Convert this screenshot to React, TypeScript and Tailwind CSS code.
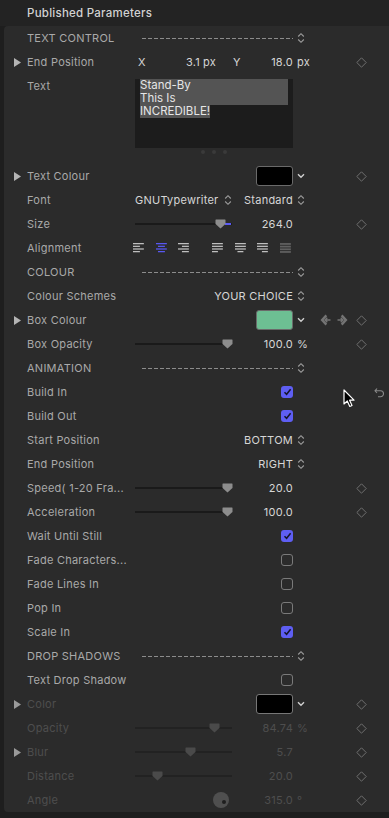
import type { ReactNode } from 'react';

const LABEL = 'text-[#a9a9a9]';
const VALUE = 'text-[#d6d6d6]';

function Tri({ dim }: { dim?: boolean }) {
  return (
    <svg width="7" height="9" viewBox="0 0 7 9">
      <path d="M0 0 L7 4.5 L0 9 Z" fill={dim ? '#9a9a9a' : '#b4b4b4'} />
    </svg>
  );
}

function Diamond() {
  return (
    <svg width="11" height="11" viewBox="0 0 11 11">
      <path d="M5.5 0.8 L10.2 5.5 L5.5 10.2 L0.8 5.5 Z" fill="none" stroke="#6f6f6f" strokeWidth="1" />
    </svg>
  );
}

function UpDown({ dim }: { dim?: boolean }) {
  return (
    <svg width="8" height="12" viewBox="0 0 8 12">
      <path d="M1.2 4.5 L4 1.7 L6.8 4.5 M1.2 7.5 L4 10.3 L6.8 7.5" fill="none" stroke={dim ? '#555' : '#9c9c9c'} strokeWidth="1.1" />
    </svg>
  );
}

function ChevronDown() {
  return (
    <svg width="8" height="6" viewBox="0 0 8 6">
      <path d="M1 1.3 L4 4.3 L7 1.3" fill="none" stroke="#d0d0d0" strokeWidth="1.4" />
    </svg>
  );
}

function Thumb({ dim }: { dim?: boolean }) {
  return (
    <svg width="11" height="10" viewBox="0 0 11 10">
      <path d="M1 0.5 H10 Q10.5 0.5 10.5 1 V5 L5.5 9.5 L0.5 5 V1 Q0.5 0.5 1 0.5 Z" fill={dim ? '#4a4a4a' : '#8d8d8d'} />
    </svg>
  );
}

function Check({ on }: { on?: boolean }) {
  if (!on) return <div className="w-[12px] h-[12px] rounded-[3px] border border-[#7a7a7a]" />;
  return (
    <div className="w-[12px] h-[12px] rounded-[3px] bg-[#5e5ef2] flex items-center justify-center">
      <svg width="9" height="8" viewBox="0 0 9 8">
        <path d="M1.5 4.2 L3.6 6.3 L7.6 1.2" fill="none" stroke="#15152a" strokeWidth="1.5" />
      </svg>
    </div>
  );
}

function Slider({ pos, value, blue, dim }: { pos: number; value: string; blue?: boolean; dim?: boolean }) {
  return (
    <div className="flex items-center w-full">
      <div className="relative w-[97px] h-[10px]">
        <div className={`absolute left-0 right-0 top-[4px] h-[2px] ${dim ? 'bg-[#222]' : 'bg-[#1a1a1a]'}`} />
        {blue && <div className="absolute top-[4px] h-[2px] w-[6px] bg-[#5a5af5]" style={{ left: pos + 5 }} />}
        <div className="absolute top-0" style={{ left: pos - 5 }}>
          <Thumb dim={dim} />
        </div>
      </div>
      <span className={`flex-1 text-right ${dim ? 'text-[#4e4e4e]' : VALUE}`}>{value}</span>
    </div>
  );
}

function Dashed() {
  return (
    <div className="flex items-center w-full pl-[7px]">
      <div className="h-[1px] w-full bg-[repeating-linear-gradient(90deg,#8c8c8c_0_4px,transparent_4px_6px)]" />
    </div>
  );
}

function Swatch({ color, dim }: { color: string; dim?: boolean }) {
  return (
    <div className="w-full flex justify-end">
      <div className={`w-[37px] h-[20px] rounded-[3px] border ${dim ? 'border-[#777]' : 'border-[#6a6a6a]'}`} style={{ background: color }} />
    </div>
  );
}

type RowProps = {
  label: string;
  tri?: boolean;
  dim?: boolean;
  main?: ReactNode;
  suffix?: ReactNode;
  nav?: ReactNode;
  diamond?: boolean;
  extra?: ReactNode;
};

function Row({ label, tri, dim, main, suffix, nav, diamond, extra }: RowProps) {
  return (
    <div className="flex items-center h-[24px]">
      <div className="w-[23px] pl-[10px] flex items-center">{tri && <Tri dim={dim} />}</div>
      <div className={`w-[108px] whitespace-nowrap ${dim ? 'text-[#4e4e4e]' : LABEL}`}>{label}</div>
      <div className="w-[158px] flex items-center">{main}</div>
      <div className={`w-[22px] flex items-center pl-[4px] ${dim ? 'text-[#4e4e4e]' : VALUE}`}>{suffix}</div>
      <div className="w-[34px] flex items-center">{nav}</div>
      <div className="w-[24px] flex items-center justify-center">{diamond && <Diamond />}</div>
      <div className="w-[12px] flex items-center justify-center">{extra}</div>
    </div>
  );
}

function Section({ label }: { label: string }) {
  return <Row label={label} main={<Dashed />} suffix={<UpDown />} />;
}

function PopupValue({ text }: { text: string }) {
  return <span className={`w-full text-right ${VALUE}`}>{text}</span>;
}

function AlignIcon({ kind, active, faded }: { kind: string; active?: boolean; faded?: boolean }) {
  const c = active ? '#5b5bff' : faded ? '#777' : '#c8c8c8';
  const rows: [number, number][] =
    kind === 'l' ? [[0, 11], [0, 7], [0, 11], [0, 7]] :
    kind === 'c' ? [[0, 11], [2, 7], [0, 11], [2, 7]] :
    kind === 'r' ? [[0, 11], [4, 7], [0, 11], [4, 7]] :
    kind === 'jl' ? [[0, 11], [0, 11], [0, 11], [0, 6]] :
    kind === 'jc' ? [[0, 11], [0, 11], [0, 11], [2.5, 6]] :
    kind === 'jr' ? [[0, 11], [0, 11], [0, 11], [5, 6]] :
    [[0, 11], [0, 11], [0, 11], [0, 11]];
  return (
    <svg width="11" height="10" viewBox="0 0 11 10" className={faded ? 'opacity-70' : ''}>
      {rows.map(([x, w], i) => (
        <rect key={i} x={x} y={i * 2.7} width={w} height={faded ? 1.8 : 1.2} fill={c} />
      ))}
    </svg>
  );
}

function NavArrow({ dir }: { dir: 'l' | 'r' }) {
  return (
    <svg width="11" height="12" viewBox="0 0 11 12" style={{ transform: dir === 'r' ? 'scaleX(-1)' : undefined }}>
      <path d="M5.5 0.5 L0.5 6 L5.5 11.5 L7.2 9.8 L3.8 6 L7.2 2.2 Z" fill="#747474" />
      <path d="M5 6 H10.5 M7.3 3.8 L5 6 L7.3 8.2" fill="none" stroke="#747474" strokeWidth="1.4" />
    </svg>
  );
}

export default function App() {
  return (
    <div className="w-[389px] h-[818px] bg-[#1e1e1e] overflow-hidden text-[11px] leading-[14px] tracking-[0.25px]" style={{ fontFamily: 'Inter, "Noto Sans", sans-serif' }}>
      <div className="h-[26px] bg-[#232323] flex items-center pl-[27px] text-[#d2d2d2] text-[11.5px] font-medium">
        Published Parameters
      </div>

      <div className="ml-[4px] bg-[#2b2b2b] rounded-tl-[4px] rounded-bl-[4px] relative">
        <Section label="TEXT CONTROL" />
        <Row
          label="End Position"
          tri
          diamond
          main={
            <div className={`flex w-full items-center ${VALUE}`}>
              <span className="w-[12px] pl-[3px]">X</span>
              <span className="w-[53px] text-right">3.1</span>
              <span className="ml-[3px] w-[30px]">px</span>
              <span className="w-[10px]">Y</span>
              <span className="flex-1 text-right">18.0</span>
            </div>
          }
          suffix={<span>px</span>}
        />

        {/* text box */}
        <div className="flex h-[90px] pt-[5px]">
          <div className="w-[23px]" />
          <div className={`w-[108px] ${LABEL}`}>Text</div>
          <div className="w-[158px] flex flex-col items-center">
            <div className="w-[158px] h-[69px] bg-[#1c1c1c] px-[5px] text-[#e6e6e6] text-[11.5px] leading-[13px] tracking-normal">
              <div className="bg-[#545454]">Stand-By</div>
              <div className="bg-[#545454]">This Is</div>
              <div>
                <span className="bg-[#545454]">INCREDIBLE!</span>
              </div>
            </div>
            <div className="flex gap-[7px] mt-[2px]">
              <div className="w-[4px] h-[4px] rounded-full bg-[#3a3a3a]" />
              <div className="w-[4px] h-[4px] rounded-full bg-[#3a3a3a]" />
              <div className="w-[4px] h-[4px] rounded-full bg-[#3a3a3a]" />
            </div>
          </div>
        </div>

        <Row label="Text Colour" tri diamond main={<Swatch color="#000" />} suffix={<ChevronDown />} />
        <Row
          label="Font"
          main={
            <div className={`flex w-full items-center ${VALUE}`}>
              <span>GNUTypewriter</span>
              <span className="ml-[5px]"><UpDown /></span>
              <span className="flex-1 text-right">Standard</span>
            </div>
          }
          suffix={<UpDown />}
        />
        <Row label="Size" diamond main={<Slider pos={85} value="264.0" blue />} />
        <Row
          label="Alignment"
          main={
            <div className="flex items-center w-full -ml-[2px]">
              <AlignIcon kind="l" />
              <span className="w-[12px]" />
              <AlignIcon kind="c" active />
              <span className="w-[12px]" />
              <AlignIcon kind="r" />
              <span className="w-[23px]" />
              <AlignIcon kind="jl" />
              <span className="w-[12px]" />
              <AlignIcon kind="jc" />
              <span className="w-[12px]" />
              <AlignIcon kind="jr" />
              <span className="w-[12px]" />
              <AlignIcon kind="ja" faded />
            </div>
          }
        />
        <Section label="COLOUR" />
        <Row label="Colour Schemes" main={<PopupValue text="YOUR CHOICE" />} suffix={<UpDown />} />
        <Row
          label="Box Colour"
          tri
          diamond
          main={<Swatch color="#6dbf93" />}
          suffix={<ChevronDown />}
          nav={
            <div className="flex items-center gap-[6px] pl-[5px]">
              <NavArrow dir="l" />
              <NavArrow dir="r" />
            </div>
          }
        />
        <Row label="Box Opacity" diamond main={<Slider pos={92} value="100.0" />} suffix={<span>%</span>} />
        <Section label="ANIMATION" />
        <Row
          label="Build In"
          main={<div className="w-full flex justify-end"><Check on /></div>}
          extra={
            <svg width="11" height="11" viewBox="0 0 11 11">
              <path d="M3 1.5 L1 3.8 L3 6 M1.2 3.8 H6.5 A3 3 0 0 1 6.5 9.8 H4" fill="none" stroke="#8a8a8a" strokeWidth="1.1" />
            </svg>
          }
        />
        <Row label="Build Out" main={<div className="w-full flex justify-end"><Check on /></div>} />
        <Row label="Start Position" main={<PopupValue text="BOTTOM" />} suffix={<UpDown />} />
        <Row label="End Position" main={<PopupValue text="RIGHT" />} suffix={<UpDown />} />
        <Row label="Speed( 1-20 Fra..." diamond main={<Slider pos={92} value="20.0" />} />
        <Row label="Acceleration" diamond main={<Slider pos={92} value="100.0" />} />
        <Row label="Wait Until Still" main={<div className="w-full flex justify-end"><Check on /></div>} />
        <Row label="Fade Characters..." main={<div className="w-full flex justify-end"><Check /></div>} />
        <Row label="Fade Lines In" main={<div className="w-full flex justify-end"><Check /></div>} />
        <Row label="Pop In" main={<div className="w-full flex justify-end"><Check /></div>} />
        <Row label="Scale In" main={<div className="w-full flex justify-end"><Check on /></div>} />
        <Section label="DROP SHADOWS" />
        <Row label="Text Drop Shadow" main={<div className="w-full flex justify-end"><Check /></div>} />
        <Row label="Color" tri dim diamond main={<Swatch color="#000" dim />} suffix={<ChevronDown />} />
        <Row label="Opacity" dim diamond main={<Slider pos={79} value="84.74" dim />} suffix={<span>%</span>} />
        <Row label="Blur" tri dim diamond main={<Slider pos={55} value="5.7" dim />} />
        <Row label="Distance" dim diamond main={<Slider pos={22} value="20.0" dim />} />
        <Row
          label="Angle"
          dim
          diamond
          main={
            <div className="flex items-center w-full">
              <div className="w-[97px] flex justify-end pr-[3px]">
                <div className="w-[16px] h-[16px] rounded-full bg-[#4f4f4f] relative">
                  <div className="absolute w-[4px] h-[4px] rounded-full bg-[#1e1e1e] left-[9px] top-[8px]" />
                </div>
              </div>
              <span className="flex-1 text-right text-[#4e4e4e]">315.0</span>
            </div>
          }
          suffix={<span>°</span>}
        />

        {/* mouse pointer */}
        <svg className="absolute left-[339px] top-[363px]" width="13" height="19" viewBox="0 0 13 19">
          <path d="M1 1 L1 15 L4.3 12 L6.8 17.5 L9 16.5 L6.6 11.2 L11 11.2 Z" fill="#000" stroke="#fff" strokeWidth="1.2" strokeLinejoin="round" />
        </svg>
      </div>
    </div>
  );
}
